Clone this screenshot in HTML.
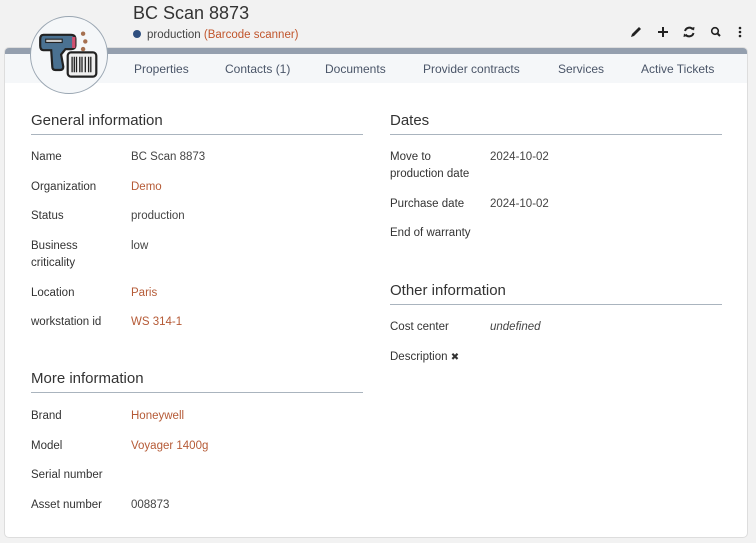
<!DOCTYPE html>
<html><head><style>
body{margin:0;width:756px;height:543px;background:#f2f2f2;font-family:"Liberation Sans",sans-serif;position:relative;overflow:hidden;color:#333}
.card{position:absolute;left:5px;top:48px;width:742px;height:483px;background:#fff;border-top:6px solid #949fae;border-radius:4px;box-shadow:0 0 0 1px #ddd}
.tabs{position:absolute;left:0;top:0;width:742px;height:29px;background:#f5f7f9}
.tab{position:absolute;top:8px;font-size:12px;color:#4a5568}
.title{position:absolute;left:133px;top:3px;font-size:18px;color:#333}
.sub{position:absolute;left:133px;top:29px;font-size:11.5px;color:#444}
.dot{display:inline-block;width:8px;height:8px;border-radius:50%;background:#2f4f7f;margin-right:6px}
.or{color:#c0552c}
.avatar{position:absolute;left:30px;top:16px;width:76px;height:76px;border-radius:50%;background:#f5f7f9;border:1px solid #9aa6b2;z-index:2}
h2{position:absolute;margin:0;font-weight:normal;font-size:15px;color:#333;border-bottom:1px solid #aab4be;padding-bottom:5px}
.l,.v{position:absolute;font-size:11.5px;line-height:17px}
.l{color:#333}
.v{color:#444}
.v.o{color:#b55a36}
</style></head><body>
<div class="title">BC Scan 8873</div>
<div class="sub"><span class="dot"></span>production <span class="or">(Barcode scanner)</span></div>
<svg style="position:absolute;left:629px;top:25px" width="120" height="14" viewBox="0 0 120 14">
<path d="M2 12 L3 9 L10 2 L12 4 L5 11 Z" fill="#222"/>
<path d="M34 2 V12 M29 7 H39" stroke="#222" stroke-width="2"/>
<path d="M56 6 A4.5 4.5 0 0 1 64 4.5 M64.5 8 A4.5 4.5 0 0 1 56.5 9.5" stroke="#222" stroke-width="2" fill="none"/><path d="M62 3 L65.5 2 L65 5.5Z M58 11 L54.5 12 L55 8.5Z" fill="#222"/>
<circle cx="86" cy="6" r="3.3" stroke="#222" stroke-width="1.6" fill="none"/><path d="M88.5 8.5 L91 11" stroke="#222" stroke-width="2"/>
<circle cx="111" cy="3" r="1.3" fill="#222"/><circle cx="111" cy="7" r="1.3" fill="#222"/><circle cx="111" cy="11" r="1.3" fill="#222"/>
</svg>
<div class="avatar"><svg width="76" height="76" viewBox="0 0 76 76">
<g transform="translate(-4,-2) scale(1.1)">
<path d="M15 18 H40 Q44 18 44 22 V28 Q44 31 40 31 H35 L31 36 L33 47 Q33 50 30 50 H26 Q23 50 23 47 L22 32 H15 Q12 32 12 28 V22 Q12 18 15 18Z" fill="#4a7191" stroke="#222" stroke-width="2"/>
<rect x="17" y="22" width="15" height="3" fill="#ccc" stroke="#222" stroke-width="1"/>
<path d="M41 20 L44 20 L44 30 L41 30Z" fill="#d05070"/>
<circle cx="51" cy="17" r="2" fill="#a57050"/><circle cx="53" cy="24" r="2" fill="#a57050"/><circle cx="51" cy="31" r="2" fill="#a57050"/>
<rect x="37" y="34" width="26" height="22" rx="3" fill="#eee" stroke="#222" stroke-width="2"/>
<path d="M41 38V52M43 38V52M45 38V52M48 38V52M50 38V52M53 38V52M56 38V52M58 38V52" stroke="#222" stroke-width="1.2"/>
</g></svg></div>
<div class="card"><div class="tabs">
<span class="tab" style="left:129px">Properties</span>
<span class="tab" style="left:220px">Contacts (1)</span>
<span class="tab" style="left:320px">Documents</span>
<span class="tab" style="left:418px">Provider contracts</span>
<span class="tab" style="left:553px">Services</span>
<span class="tab" style="left:636px">Active Tickets</span>
</div></div>
<h2 style="left:31px;top:112px;width:332px">General information</h2>
<h2 style="left:390px;top:112px;width:332px">Dates</h2>
<h2 style="left:390px;top:282px;width:332px">Other information</h2>
<h2 style="left:31px;top:370px;width:332px">More information</h2>
<div class="l" style="left:31px;top:149px">Name</div><div class="v" style="left:131px;top:149px">BC Scan 8873</div>
<div class="l" style="left:31px;top:179px">Organization</div><div class="v o" style="left:131px;top:179px">Demo</div>
<div class="l" style="left:31px;top:208px">Status</div><div class="v" style="left:131px;top:208px">production</div>
<div class="l" style="left:31px;top:238px">Business<br>criticality</div><div class="v" style="left:131px;top:238px">low</div>
<div class="l" style="left:31px;top:285px">Location</div><div class="v o" style="left:131px;top:285px">Paris</div>
<div class="l" style="left:31px;top:314px">workstation id</div><div class="v o" style="left:131px;top:314px">WS 314-1</div>
<div class="l" style="left:390px;top:149px">Move to<br>production date</div><div class="v" style="left:490px;top:149px">2024-10-02</div>
<div class="l" style="left:390px;top:196px">Purchase date</div><div class="v" style="left:490px;top:196px">2024-10-02</div>
<div class="l" style="left:390px;top:225px">End of warranty</div>
<div class="l" style="left:390px;top:319px">Cost center</div><div class="v" style="left:490px;top:319px;font-style:italic">undefined</div>
<div class="l" style="left:390px;top:349px">Description <span style="font-size:10px">✖</span></div>
<div class="l" style="left:31px;top:408px">Brand</div><div class="v o" style="left:131px;top:408px">Honeywell</div>
<div class="l" style="left:31px;top:438px">Model</div><div class="v o" style="left:131px;top:438px">Voyager 1400g</div>
<div class="l" style="left:31px;top:467px">Serial number</div>
<div class="l" style="left:31px;top:497px">Asset number</div><div class="v" style="left:131px;top:497px">008873</div>
</body></html>
